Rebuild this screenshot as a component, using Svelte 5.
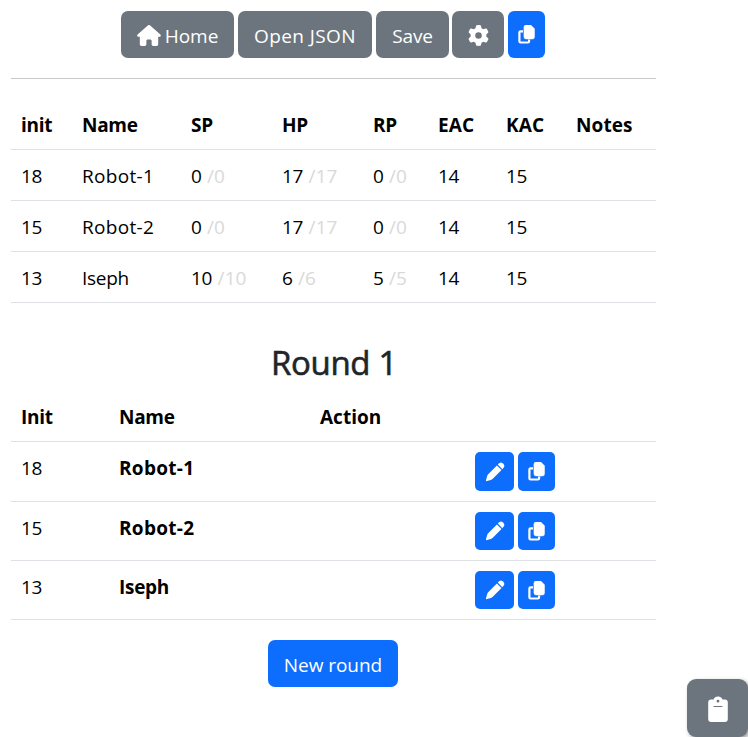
<script>
  const stats = [
    { init: 18, name: 'Robot-1', sp: [0, 0], hp: [17, 17], rp: [0, 0], eac: 14, kac: 15 },
    { init: 15, name: 'Robot-2', sp: [0, 0], hp: [17, 17], rp: [0, 0], eac: 14, kac: 15 },
    { init: 13, name: 'Iseph', sp: [10, 10], hp: [6, 6], rp: [5, 5], eac: 14, kac: 15 }
  ];
  const heads = ['init', 'Name', 'SP', 'HP', 'RP', 'EAC', 'KAC', 'Notes'];
</script>

{#snippet copyIcon()}
  <svg class="copy" viewBox="0 0 17 19" width="17" height="19">
    <path d="M5 6.3H2.6Q1.4 6.3 1.4 7.5V16.2Q1.4 17.5 2.6 17.5H9.9Q11.1 17.5 11.1 16.2V14.5" fill="none" stroke="#fff" stroke-width="2.2" />
    <path d="M8.2 0H12.8L16.6 3.8V11.8Q16.6 14.1 14.4 14.1H8.2Q5.9 14.1 5.9 11.8V2.2Q5.9 0 8.2 0Z" fill="#fff" stroke="#fff" stroke-width=".4" stroke-linejoin="round" />
  </svg>
{/snippet}

{#snippet pair(values)}
  <td class="pair">{values[0]} <span class="max">/{values[1]}</span></td>
{/snippet}

<main>
  <nav>
    <button class="home">
      <svg viewBox="0 0 576 512" width="24" height="21"><path fill="#fff" d="M575.8 255.5c0 18-15 32.1-32 32.1h-32l.7 160.2c0 2.7-.2 5.4-.5 8.1V472c0 22.1-17.9 40-40 40H456c-1.1 0-2.2 0-3.3-.1c-1.4 .1-2.8 .1-4.2 .1H416 392c-22.1 0-40-17.9-40-40V448 384c0-17.7-14.3-32-32-32H256c-17.7 0-32 14.3-32 32v64 24c0 22.1-17.9 40-40 40H160 128.1c-1.5 0-3-.1-4.5-.2c-1.2 .1-2.4 .2-3.6 .2H104c-22.1 0-40-17.9-40-40V360c0-.9 0-1.9 .1-2.8V287.6H32c-18 0-32-14-32-32.1c0-9 3-17 10-24L266.4 8c7-7 15-8 22-8s15 2 21 7L564.8 231.5c8 7 12 15 11 24z" /></svg>
      <span>Home</span>
    </button>
    <button class="open">Open JSON</button>
    <button class="save">Save</button>
    <button class="settings" aria-label="Settings">
      <svg viewBox="0 0 512 512" width="21" height="21"><path fill="#fff" d="M495.9 166.6c3.2 8.7 .5 18.4-6.4 24.6l-43.3 39.4c1.1 8.3 1.7 16.8 1.7 25.4s-.6 17.1-1.7 25.4l43.3 39.4c6.9 6.2 9.6 15.9 6.4 24.6c-4.4 11.9-9.7 23.3-15.8 34.3l-4.7 8.1c-6.6 11-14 21.4-22.1 31.2c-5.9 7.2-15.7 9.6-24.5 6.8l-55.7-17.7c-13.4 10.3-28.2 18.9-44 25.4l-12.5 57.1c-2 9.1-9 16.3-18.2 17.8c-13.8 2.3-28 3.5-42.5 3.5s-28.7-1.2-42.5-3.5c-9.2-1.5-16.2-8.7-18.2-17.8l-12.5-57.1c-15.8-6.5-30.6-15.1-44-25.4L83.1 425.9c-8.8 2.8-18.6 .3-24.5-6.8c-8.1-9.8-15.5-20.2-22.1-31.2l-4.7-8.1c-6.1-11-11.4-22.4-15.8-34.3c-3.2-8.7-.5-18.4 6.4-24.6l43.3-39.4C64.6 273.1 64 264.6 64 256s.6-17.1 1.7-25.4L22.4 191.2c-6.9-6.2-9.6-15.9-6.4-24.6c4.4-11.9 9.7-23.3 15.8-34.3l4.7-8.1c6.6-11 14-21.4 22.1-31.2c5.9-7.2 15.7-9.6 24.5-6.8l55.7 17.7c13.4-10.3 28.2-18.9 44-25.4l12.5-57.1c2-9.1 9-16.3 18.2-17.8C227.3 1.2 241.5 0 256 0s28.7 1.2 42.5 3.5c9.2 1.5 16.2 8.7 18.2 17.8l12.5 57.1c15.8 6.5 30.6 15.1 44 25.4l55.7-17.7c8.8-2.8 18.6-.3 24.5 6.8c8.1 9.8 15.5 20.2 22.1 31.2l4.7 8.1c6.1 11 11.4 22.4 15.8 34.3zM256 336a80 80 0 1 0 0-160 80 80 0 1 0 0 160z" /></svg>
    </button>
    <button class="primary clone" aria-label="Copy">{@render copyIcon()}</button>
  </nav>

  <hr />

  <table class="stats">
    <colgroup>
      <col style="width: 61px" /><col style="width: 109px" /><col style="width: 91px" /><col style="width: 91px" />
      <col style="width: 65px" /><col style="width: 68px" /><col style="width: 70px" /><col />
    </colgroup>
    <thead>
      <tr>{#each heads as h}<th>{h}</th>{/each}</tr>
    </thead>
    <tbody>
      {#each stats as s}
        <tr>
          <td>{s.init}</td>
          <td class:robot={s.name.startsWith('Robot')}>{s.name}</td>
          {@render pair(s.sp)}
          {@render pair(s.hp)}
          {@render pair(s.rp)}
          <td>{s.eac}</td>
          <td>{s.kac}</td>
          <td></td>
        </tr>
      {/each}
    </tbody>
  </table>

  <h2>Round 1</h2>

  <table class="round">
    <colgroup>
      <col style="width: 98px" /><col style="width: 201px" /><col style="width: 155px" /><col />
    </colgroup>
    <thead>
      <tr><th>Init</th><th>Name</th><th class="action">Action</th><th></th></tr>
    </thead>
    <tbody>
      {#each stats as s}
        <tr>
          <td>{s.init}</td>
          <th class:robot={s.name.startsWith('Robot')}>{s.name}</th>
          <td></td>
          <td>
            <div class="actions">
              <button class="primary edit" aria-label="Edit">
                <svg viewBox="0 0 20 20" width="20" height="20">
                  <path fill="#fff" d="M11.9 3.5L16.5 8.1L7.5 16.9Q6.8 17.6 5.9 17.9L1.9 19.1Q.7 19.4 1 18.2L2.2 14.1Q2.5 13.1 3.2 12.3Z" />
                  <path fill="#fff" d="M12.8 2.6L14.3 1.2Q16 -.2 17.6 1.3L18.6 2.3Q20 3.9 18.7 5.6L17.3 7.2Z" />
                </svg>
              </button>
              <button class="primary clone" aria-label="Copy">{@render copyIcon()}</button>
            </div>
          </td>
        </tr>
      {/each}
    </tbody>
  </table>

  <div class="footer"><button class="primary new">New round</button></div>
</main>

<button class="clip" aria-label="Clipboard">
  <svg viewBox="0 0 20 27" width="20" height="27">
    <path fill="#fff" fill-rule="evenodd" d="M3.2 3.4H5.5C6.3 1.7 7.7.6 10 .6S13.7 1.7 14.5 3.4H16.8Q19.8 3.4 19.8 6.4V23Q19.8 26 16.8 26H3.2Q.2 26 .2 23V6.4Q.2 3.4 3.2 3.4ZM10 3.8A1.4 1.4 0 1 0 10 6.6A1.4 1.4 0 1 0 10 3.8ZM5.6 9.9V11H14.4V9.9Z" />
  </svg>
</button>

<style>
  :global(body) {
    background: #fff;
    overflow: hidden;
  }
  main {
    width: 645px;
    padding: 11px 0 0 11px;
    font: 19px/30px 'Open Sans', 'Noto Sans', sans-serif;
    letter-spacing: -0.3px;
    color: #000;
  }
  nav {
    display: flex;
    gap: 4px;
    margin-left: 110px;
  }
  button {
    display: flex;
    align-items: center;
    justify-content: center;
    height: 47px;
    padding: 2px 0 0;
    border: 0;
    border-radius: 7px;
    background: #6c757d;
    color: #fff;
    font: inherit;
    letter-spacing: inherit;
    white-space: nowrap;
  }
  .home { width: 113px; gap: 4px; letter-spacing: 0; }
  .open { width: 134px; letter-spacing: 0.4px; }
  .save { width: 73px; letter-spacing: -0.1px; }
  .settings { width: 52px; margin-left: -1px; }
  .primary { background: #0d6efd; }
  .clone { width: 37px; border-radius: 5px; padding: 0; }
  nav .clone { border-radius: 6px; }
  .edit { width: 39px; border-radius: 5px; padding: 0; }
  svg { display: block; flex: none; }
  hr {
    margin: 20px 0 21px;
    border: 0;
    height: 1px;
    background: #c8c9ca;
  }
  table {
    width: 645px;
    table-layout: fixed;
    border-collapse: separate;
    border-spacing: 0;
  }
  th, td {
    box-sizing: border-box;
    padding: 1px 0 0 10px;
    text-align: left;
    border-bottom: 1px solid #dee2e6;
    white-space: nowrap;
  }
  th { font-weight: 700; }
  .robot { letter-spacing: 0.3px; }
  .pair { word-spacing: 0.8px; }
  .max { color: #d9d9d9; letter-spacing: 0.1px; }
  .action { letter-spacing: 0; }
  .stats th:nth-child(n + 6) { letter-spacing: 0.1px; }
  .stats tr { height: 51px; }
  .stats thead tr { height: 50px; }
  h2 {
    margin: 39px 0 9px;
    padding-left: 1px;
    font-size: 33px;
    font-weight: 500;
    line-height: 41px;
    letter-spacing: -0.3px;
    text-align: center;
    color: #212529;
    -webkit-text-stroke: 0.6px #212529;
  }
  .round thead tr { height: 50px; }
  .round tbody tr { height: 59px; }
  .round tbody tr:first-child { height: 60px; }
  .round tbody th, .round tbody td {
    padding-top: 11px;
    vertical-align: top;
  }
  .round tbody td:last-child { padding-top: 10px; }
  .actions { display: flex; gap: 4px; }
  .actions button { height: 38px; }
  .round tbody tr:first-child .actions button { height: 39px; }
  .footer {
    display: flex;
    padding: 20px 0 0 257px;
  }
  .new { width: 130px; letter-spacing: -0.05px; }
  .clip {
    position: absolute;
    right: 0;
    bottom: 0;
    width: 61px;
    height: 58px;
    border-radius: 9px;
    padding: 3px 0 0;
    box-shadow: 2px 2px 4px rgba(0, 0, 0, 0.4);
  }
</style>
